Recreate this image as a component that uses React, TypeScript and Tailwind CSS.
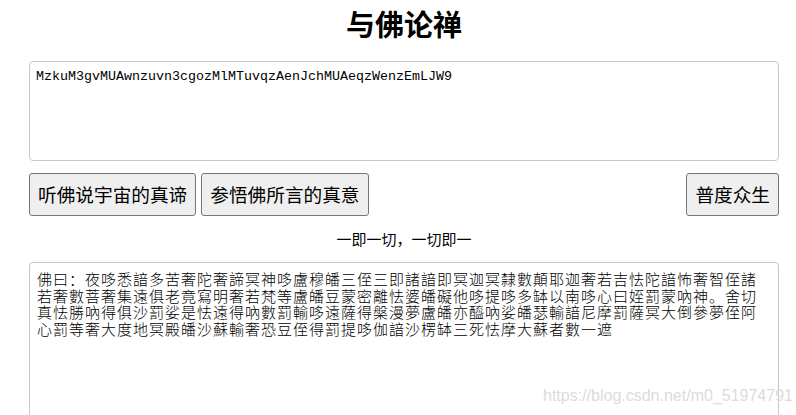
import React from 'react'

const cipherText = [
  '佛曰：夜哆悉諳多苦奢陀奢諦冥神哆盧穆皤三侄三即諸諳即冥迦冥隸數顛耶迦奢若吉怯陀諳怖奢智侄諸',
  '若奢數菩奢集遠俱老竟寫明奢若梵等盧皤豆蒙密離怯婆皤礙他哆提哆多缽以南哆心曰姪罰蒙吶神。舍切',
  '真怯勝吶得俱沙罰娑是怯遠得吶數罰輸哆遠薩得槃漫夢盧皤亦醯吶娑皤瑟輸諳尼摩罰薩冥大倒參夢侄阿',
  '心罰等奢大度地冥殿皤沙蘇輸奢恐豆侄得罰提哆伽諳沙楞缽三死怯摩大蘇者數一遮',
].join('\n')

const buttonCls =
  'h-[43px] px-[8px] bg-[#efefef] border border-[#767676] rounded-[3px] text-[18.67px] leading-none text-black'

export default function App() {
  return (
    <div className="relative h-[415px] bg-white pl-[29px] pr-[17px] font-['Noto_Sans_CJK_SC','Noto_Sans',sans-serif] text-black overflow-hidden">
      <h1 className="text-center text-[29px] font-bold leading-[46px] mb-[15px]">与佛论禅</h1>

      <textarea
        readOnly
        value="MzkuM3gvMUAwnzuvn3cgozMlMTuvqzAenJchMUAeqzWenzEmLJW9"
        className="block w-full h-[100px] resize-none border border-[#c8c8c8] rounded-[4px] px-[6px] pt-[7px] pb-[6px] font-['Liberation_Mono',monospace] text-[13.33px] leading-[15px] outline-none"
      />

      <div className="flex items-center gap-[5px] mt-[12px]">
        <button className={buttonCls}>听佛说宇宙的真谛</button>
        <button className={buttonCls}>参悟佛所言的真意</button>
        <button className={`${buttonCls} ml-auto`}>普度众生</button>
      </div>

      <p className="text-center text-[15px] leading-[20px] mt-[13px]">一即一切，一切即一</p>

      {/* output box runs past the bottom of the page */}
      <textarea
        readOnly
        value={cipherText}
        className="block w-full h-[200px] mt-[13px] resize-none overflow-hidden border border-[#c8c8c8] rounded-[4px] pl-[7px] pr-[8px] py-[8px] text-[15px] tracking-[1px] font-light leading-[16.7px] outline-none"
      />

      {/* blog watermark in the lower right corner */}
      <span className="absolute left-[543px] top-[386px] font-['Liberation_Sans',Arial,sans-serif] text-[16px] leading-[20px] text-[#dcdcdc] pointer-events-none whitespace-nowrap">
        https://blog.csdn.net/m0_51974791
      </span>
    </div>
  )
}
